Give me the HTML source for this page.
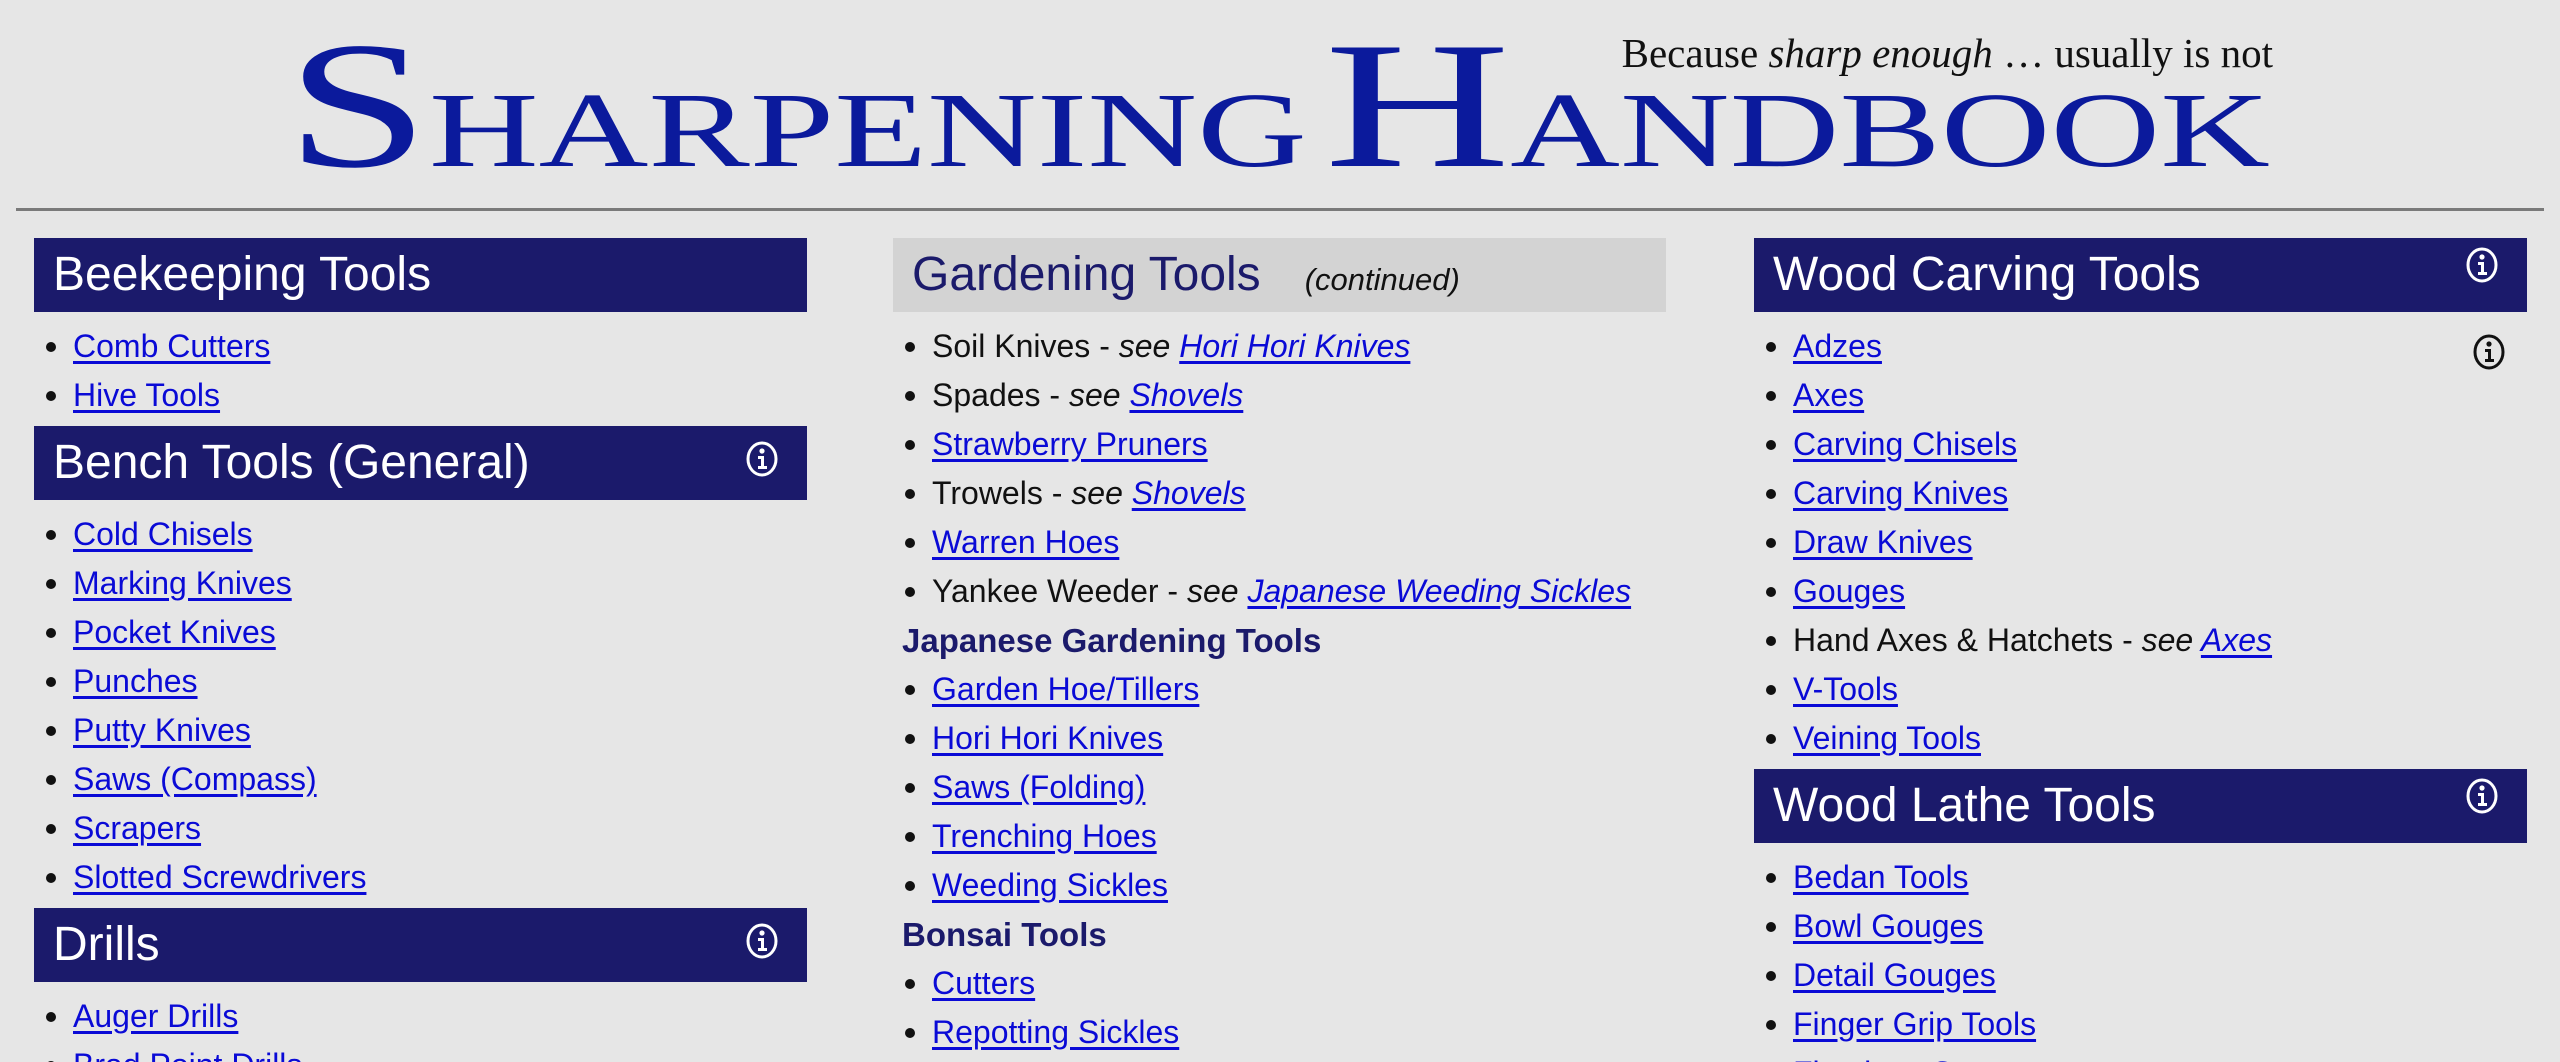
<!DOCTYPE html>
<html><head><meta charset="utf-8">
<style>
html,body{margin:0;padding:0;background:#e6e6e6;width:2560px;height:1062px;overflow:hidden;font-family:"Liberation Sans",sans-serif}
#wrap{position:relative;width:2560px;height:1062px;overflow:hidden}
.title{position:absolute;left:286px;top:16px;white-space:nowrap;color:#0b1a9c;font-family:"Liberation Serif",serif;transform:scaleX(1.42);transform-origin:0 0;line-height:1}
.title .big{font-size:181px}
.title .sm{font-size:107px}
.tag{position:absolute;right:287px;top:33px;font-family:"Liberation Serif",serif;font-size:41px;color:#111;white-space:nowrap;line-height:1}
.hr{position:absolute;left:16px;width:2528px;top:208px;height:3px;background:#7a7a7a}
.col{position:absolute;top:238px;width:773px}
.h{height:74px;background:#1b1a6b;color:#fff;font-size:48px;line-height:74px;padding-left:19px;position:relative;box-sizing:border-box}
.h.g{background:#d3d3d3;color:#1b1a6b}
.h .c{font-style:italic;font-size:31px;color:#111;margin-left:44px}
.ic{position:absolute;right:28px;top:14px}
ul{margin:10px 0 6px 0;padding:0 0 0 39px;list-style:disc}
li{font-size:32px;line-height:49px;height:49px;color:#111}
li::marker{font-size:34px}
a{color:#0a0ad6;text-decoration:underline;text-underline-offset:4px}
.sub{font-weight:bold;color:#1b1a6b;font-size:33px;line-height:49px;height:49px;margin-left:-30px;list-style:none}
</style></head><body><div id="wrap">
<div class="title"><span class="big">S</span><span class="sm">HARPENING</span><span class="sm" style="font-size:50px"> </span><span class="big">H</span><span class="sm">ANDBOOK</span></div>
<div class="tag">Because <i>sharp enough</i> … usually is not</div>
<div class="hr"></div>

<div class="col" style="left:34px">
<div class="h">Beekeeping Tools</div>
<ul><li><a>Comb Cutters</a></li><li><a>Hive Tools</a></li></ul>
<div class="h">Bench Tools (General)<svg class="ic" width="34" height="38" viewBox="0 0 34 38"><ellipse cx="17" cy="19" rx="14" ry="16" fill="none" stroke="#fff" stroke-width="3"/><circle cx="17" cy="11" r="2.6" fill="#fff"/><path d="M13 16h6v10h3v3h-9v-3h3v-7h-3z" fill="#fff"/></svg></div>
<ul><li><a>Cold Chisels</a></li><li><a>Marking Knives</a></li><li><a>Pocket Knives</a></li><li><a>Punches</a></li><li><a>Putty Knives</a></li><li><a>Saws (Compass)</a></li><li><a>Scrapers</a></li><li><a>Slotted Screwdrivers</a></li></ul>
<div class="h" style="margin-top:6px">Drills<svg class="ic" width="34" height="38" viewBox="0 0 34 38"><ellipse cx="17" cy="19" rx="14" ry="16" fill="none" stroke="#fff" stroke-width="3"/><circle cx="17" cy="11" r="2.6" fill="#fff"/><path d="M13 16h6v10h3v3h-9v-3h3v-7h-3z" fill="#fff"/></svg></div>
<ul><li><a>Auger Drills</a></li><li><a>Brad Point Drills</a></li></ul>
</div>

<div class="col" style="left:893px">
<div class="h g">Gardening Tools<span class="c">(continued)</span></div>
<ul><li>Soil Knives - <i>see <a>Hori Hori Knives</a></i></li><li>Spades - <i>see <a>Shovels</a></i></li><li><a>Strawberry Pruners</a></li><li>Trowels - <i>see <a>Shovels</a></i></li><li><a>Warren Hoes</a></li><li>Yankee Weeder - <i>see <a>Japanese Weeding Sickles</a></i></li>
<li class="sub">Japanese Gardening Tools</li>
<li><a>Garden Hoe/Tillers</a></li><li><a>Hori Hori Knives</a></li><li><a>Saws (Folding)</a></li><li><a>Trenching Hoes</a></li><li><a>Weeding Sickles</a></li>
<li class="sub">Bonsai Tools</li>
<li><a>Cutters</a></li><li><a>Repotting Sickles</a></li></ul>
</div>

<div class="col" style="left:1754px">
<div class="h">Wood Carving Tools<svg class="ic" style="top:8px" width="34" height="38" viewBox="0 0 34 38"><ellipse cx="17" cy="19" rx="14" ry="16" fill="none" stroke="#fff" stroke-width="3"/><circle cx="17" cy="11" r="2.6" fill="#fff"/><path d="M13 16h6v10h3v3h-9v-3h3v-7h-3z" fill="#fff"/></svg></div>
<svg style="position:absolute;left:718px;top:95px" width="34" height="38" viewBox="0 0 34 38"><ellipse cx="17" cy="19" rx="14" ry="16" fill="none" stroke="#111" stroke-width="3"/><circle cx="17" cy="11" r="2.6" fill="#111"/><path d="M13 16h6v10h3v3h-9v-3h3v-7h-3z" fill="#111"/></svg>
<ul><li><a>Adzes</a></li><li><a>Axes</a></li><li><a>Carving Chisels</a></li><li><a>Carving Knives</a></li><li><a>Draw Knives</a></li><li><a>Gouges</a></li><li>Hand Axes &amp; Hatchets - <i>see <a>Axes</a></i></li><li><a>V-Tools</a></li><li><a>Veining Tools</a></li></ul>
<div class="h">Wood Lathe Tools<svg class="ic" style="top:8px" width="34" height="38" viewBox="0 0 34 38"><ellipse cx="17" cy="19" rx="14" ry="16" fill="none" stroke="#fff" stroke-width="3"/><circle cx="17" cy="11" r="2.6" fill="#fff"/><path d="M13 16h6v10h3v3h-9v-3h3v-7h-3z" fill="#fff"/></svg></div>
<ul><li><a>Bedan Tools</a></li><li><a>Bowl Gouges</a></li><li><a>Detail Gouges</a></li><li><a>Finger Grip Tools</a></li><li><a>Fluteless Gouges</a></li></ul>
</div>
</div></body></html>
